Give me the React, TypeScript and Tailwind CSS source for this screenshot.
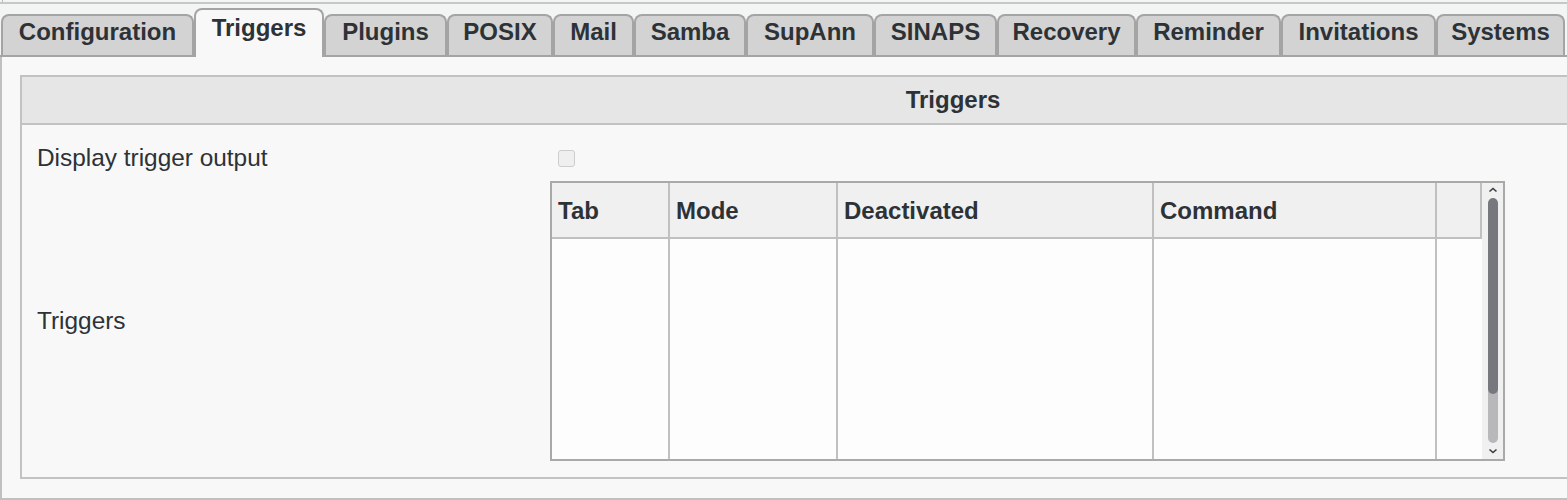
import React from 'react';
import clsx from 'clsx';

const tabs = [
  { label: 'Configuration', w: 'w-[193px]' },
  { label: 'Triggers', w: 'w-[130px]' },
  { label: 'Plugins', w: 'w-[123px]' },
  { label: 'POSIX', w: 'w-[106px]' },
  { label: 'Mail', w: 'w-[81px]' },
  { label: 'Samba', w: 'w-[112px]' },
  { label: 'SupAnn', w: 'w-[128px]' },
  { label: 'SINAPS', w: 'w-[123px]' },
  { label: 'Recovery', w: 'w-[139px]' },
  { label: 'Reminder', w: 'w-[145px]' },
  { label: 'Invitations', w: 'w-[155px]' },
  { label: 'Systems', w: 'w-[129px]' },
];

// column widths include the 2px right border
const columns = [
  { label: 'Tab', w: 'w-[118px]' },
  { label: 'Mode', w: 'w-[168px]' },
  { label: 'Deactivated', w: 'w-[316px]' },
  { label: 'Command', w: 'w-[283px]' },
  { label: '', w: 'w-[45px]' },
];

function Chevron({ down }: { down?: boolean }) {
  return (
    <svg width="10" height="6" viewBox="0 0 10 6" className="text-[#3a3d42]">
      <path
        d={down ? 'M1.5 1.5 L5 4.5 L8.5 1.5' : 'M1.5 4.5 L5 1.5 L8.5 4.5'}
        fill="none"
        stroke="currentColor"
        strokeWidth="1.6"
      />
    </svg>
  );
}

function TriggerTable() {
  return (
    <div className="flex w-[955px] h-[280px] border-2 border-[#a9a9a9] bg-[#fdfdfd]">
      <div className="flex flex-col w-[930px]">
        {/* Header row */}
        <div className="flex h-[56px] bg-[#f0f0f0] border-b-2 border-[#c0c0c0]">
          {columns.map((c) => (
            <div
              key={c.w}
              className={clsx(c.w, 'flex items-center pl-[6px] pt-[2px] border-r-2 border-[#c0c0c0] text-[24px] font-bold leading-[28px]')}
            >
              {c.label}
            </div>
          ))}
        </div>
        {/* Empty body */}
        <div className="flex flex-1">
          {columns.map((c, i) => (
            <div
              key={c.w}
              className={clsx(c.w, i < columns.length - 1 && 'border-r-2 border-[#c0c0c0]')}
            />
          ))}
        </div>
      </div>
      {/* Scrollbar */}
      <div className="flex flex-col items-center w-[21px] bg-[#f0f0f1] pt-[2px] pb-[3px]">
        <div className="h-[10px] flex items-center"><Chevron /></div>
        <div className="flex flex-col w-[10px] mt-[3px] h-[245px] rounded-full overflow-hidden bg-[#b8b8ba]">
          <div className="h-[196px] bg-[#76787d] rounded-full" />
        </div>
        <div className="flex-1" />
        <div className="h-[10px] flex items-center"><Chevron down /></div>
      </div>
    </div>
  );
}

export default function App() {
  const active = 'Triggers';
  return (
    <div className="w-[1567px] h-[500px] overflow-hidden bg-[#f3f4f4] text-[#2d3237] font-['Liberation_Sans',Arial,sans-serif]">
      <div className="h-[2px] ml-[2px] border-l border-[#b8b8b8]" />
      <div className="h-[2px] bg-[#c6c7c7]" />

      {/* Tab bar */}
      <div className="flex items-end h-[53px] pl-[1px] border-b-2 border-[#a4a4a4]">
        {tabs.map((t) => {
          const on = t.label === active;
          return (
            <div
              key={t.label}
              className={clsx(
                t.w,
                'shrink-0 flex justify-center rounded-t-[8px] border-2 border-b-0 border-[#a4a4a4] text-[24px] font-bold leading-[28px] whitespace-nowrap',
                on ? 'h-[49px] -mb-[2px] pt-[4px] bg-[#f8f8f8]' : 'h-[41px] pt-[2px] bg-[#d3d3d3]'
              )}
            >
              {t.label}
            </div>
          );
        })}
      </div>

      {/* Panel */}
      <div className="h-[443px] bg-[#f8f8f8] border-l-2 border-b-2 border-[#c0c0c0] pl-[18px] pt-[18px]">
        <div className="w-[1866px] border-2 border-[#c2c2c2] bg-[#f8f8f8]">
          <div className="h-[48px] flex items-center justify-center bg-[#e6e6e6] border-b-2 border-[#c2c2c2] text-[24px] font-bold">
            Triggers
          </div>

          <div className="flex items-center pt-[19px] pb-[9px]">
            <div className="w-[528px] pl-[15px] text-[24.4px] leading-[28px]">Display trigger output</div>
            <div className="ml-[8px] w-[17px] h-[17px] rounded-[3px] border border-[#cdcdcd] bg-[#efefef]" />
          </div>

          <div className="flex items-center pb-[16px]">
            <div className="w-[528px] pl-[15px] text-[24.4px] leading-[28px]">Triggers</div>
            <TriggerTable />
          </div>
        </div>
      </div>
    </div>
  );
}
